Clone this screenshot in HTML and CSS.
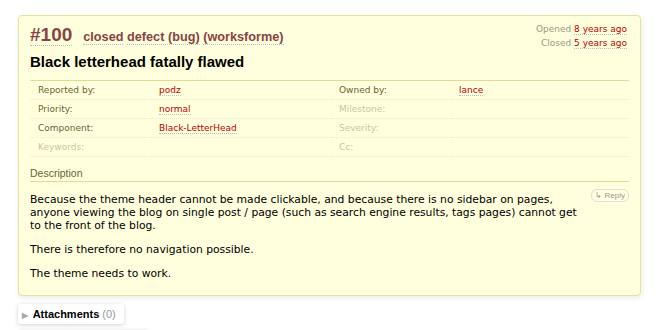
FILE: index.html
```html
<!DOCTYPE html>
<html lang="en">
<head>
    <meta charset="UTF-8">
    <title>#100 (Black letterhead fatally flawed)</title>
    <link rel="stylesheet" href="styles.css">
</head>
<body>
    <div id="ticket">
        <div class="ticket-head">
            <div class="ticket-title">
                <h2>
                    <a href="#" class="trac-id">#100</a>
                    <span class="trac-type">
                        <span class="abbr">closed</span>
                        <span class="abbr">defect (bug)</span>
                        <span class="abbr">(worksforme)</span>
                    </span>
                </h2>
                <h1 class="summary">Black letterhead fatally flawed</h1>
            </div>
            <div class="date">
                <p>Opened <a href="#" class="timeline">8 years ago</a></p>
                <p>Closed <a href="#" class="timeline">5 years ago</a></p>
            </div>
        </div>

        <div class="properties">
            <div class="th">Reported by:</div>
            <div class="td"><a href="#">podz</a></div>
            <div class="th">Owned by:</div>
            <div class="td"><a href="#">lance</a></div>

            <div class="th">Priority:</div>
            <div class="td"><a href="#">normal</a></div>
            <div class="th missing">Milestone:</div>
            <div class="td"></div>

            <div class="th">Component:</div>
            <div class="td"><a href="#">Black-LetterHead</a></div>
            <div class="th missing">Severity:</div>
            <div class="td"></div>

            <div class="th missing">Keywords:</div>
            <div class="td"></div>
            <div class="th missing">Cc:</div>
            <div class="td"></div>
        </div>

        <div class="description">
            <h3>Description</h3>
            <div class="desc-body">
                <div class="searchable">
                    <p>Because the theme header cannot be made clickable, and because there is no sidebar on pages, anyone viewing the blog on single post / page (such as search engine results, tags pages) cannot get to the front of the blog.</p>
                    <p>There is therefore no navigation possible.</p>
                    <p>The theme needs to work.</p>
                </div>
                <a href="#" class="reply">&#8627; Reply</a>
            </div>
        </div>
    </div>

    <div class="foldable">
        <span class="arrow">&#9654;</span> Attachments <span class="count">(0)</span>
    </div>
    <div class="foldable next"></div>
</body>
</html>
```

FILE: styles.css
```css
body {
    margin: 0;
    padding: 15px 19px 0 18px;
    background: #fff;
    font-family: "DejaVu Sans", Verdana, sans-serif;
    font-size: 10px;
    color: #000;
}
a {color: #b00; text-decoration: none;}

#ticket {
    background: #ffd;
    border: 1px solid #e6e1a0;
    border-radius: 4px;
    box-shadow: 1px 2px 6px rgba(0, 0, 0, 0.08);
    padding: 8px 11px 15px 11px;
}
.ticket-head {
    display: flex;
    justify-content: space-between;
    align-items: flex-start;
}
h2 {
    margin: 0;
    font-family: "Liberation Sans", Arial, sans-serif;
    font-weight: bold;
    color: #844;
    display: flex;
    align-items: baseline;
}
.trac-id {
    font-size: 19px;
    color: #844;
    border-bottom: 1px dotted #bbb;
    line-height: 21px;
    margin-right: 11px;
}
.trac-type {font-size: 12.7px;}
.abbr {border-bottom: 1px dotted #bbb;}
.summary {
    margin: 7px 0 0 0;
    font-family: "Liberation Sans", Arial, sans-serif;
    font-size: 15px;
    font-weight: bold;
    color: #000;
}
.date {
    margin-top: -1px;
    margin-right: 2px;
    color: #998;
    font-size: 9px;
    text-align: right;
}
.date p {margin: 0 0 2px 0; line-height: 12px;}
.timeline {border-bottom: 1px dotted #bbb;}

.properties {
    display: grid;
    grid-template-columns: 121px 180px 120px 1fr;
    margin-top: 10px;
    border-top: 1px solid #dd9;
    font-size: 9px;
}
.th, .td {
    padding: 0 8px;
    height: 18px;
    line-height: 19px;
    border-bottom: 1px dotted #ecebc8;
}
.th {color: #663;}
.th.missing {color: #c8c8a0;}
.td a {border-bottom: 1px dotted #bbb;}

.description h3 {
    margin: 10px 0 0 0;
    font-family: "Liberation Sans", Arial, sans-serif;
    font-size: 10.5px;
    font-weight: normal;
    color: #663;
    border-bottom: 1px solid #dd9;
    padding-bottom: 2px;
}
.desc-body {
    display: flex;
    align-items: flex-start;
    padding-top: 11px;
}
.searchable {flex: 1; font-size: 10.75px; line-height: 13px;}
.searchable p {margin: 0 0 11px 0;}
.searchable p:last-child {margin-bottom: 0;}
.reply {
    margin-top: -4px;
    margin-left: 6px;
    padding: 0 3px;
    border: 1px solid #ddd;
    border-radius: 6px;
    color: #999;
    font-family: "Liberation Sans", Arial, sans-serif;
    font-size: 8px;
    line-height: 11px;
    white-space: nowrap;
}

.foldable {
    display: inline-block;
    margin-top: 8px;
    padding: 4px 8px 4px 4px;
    border-radius: 3px;
    box-shadow: 0 1px 4px rgba(0, 0, 0, 0.18);
    font-family: "Liberation Sans", Arial, sans-serif;
    font-size: 11px;
    font-weight: bold;
}
.arrow {color: #aaa; font-size: 8px; margin-right: 2px;}
.count {color: #999; font-weight: normal;}
.foldable.next {
    display: block;
    width: 130px;
    height: 16px;
    margin-top: 6px;
    padding: 0;
}
```
